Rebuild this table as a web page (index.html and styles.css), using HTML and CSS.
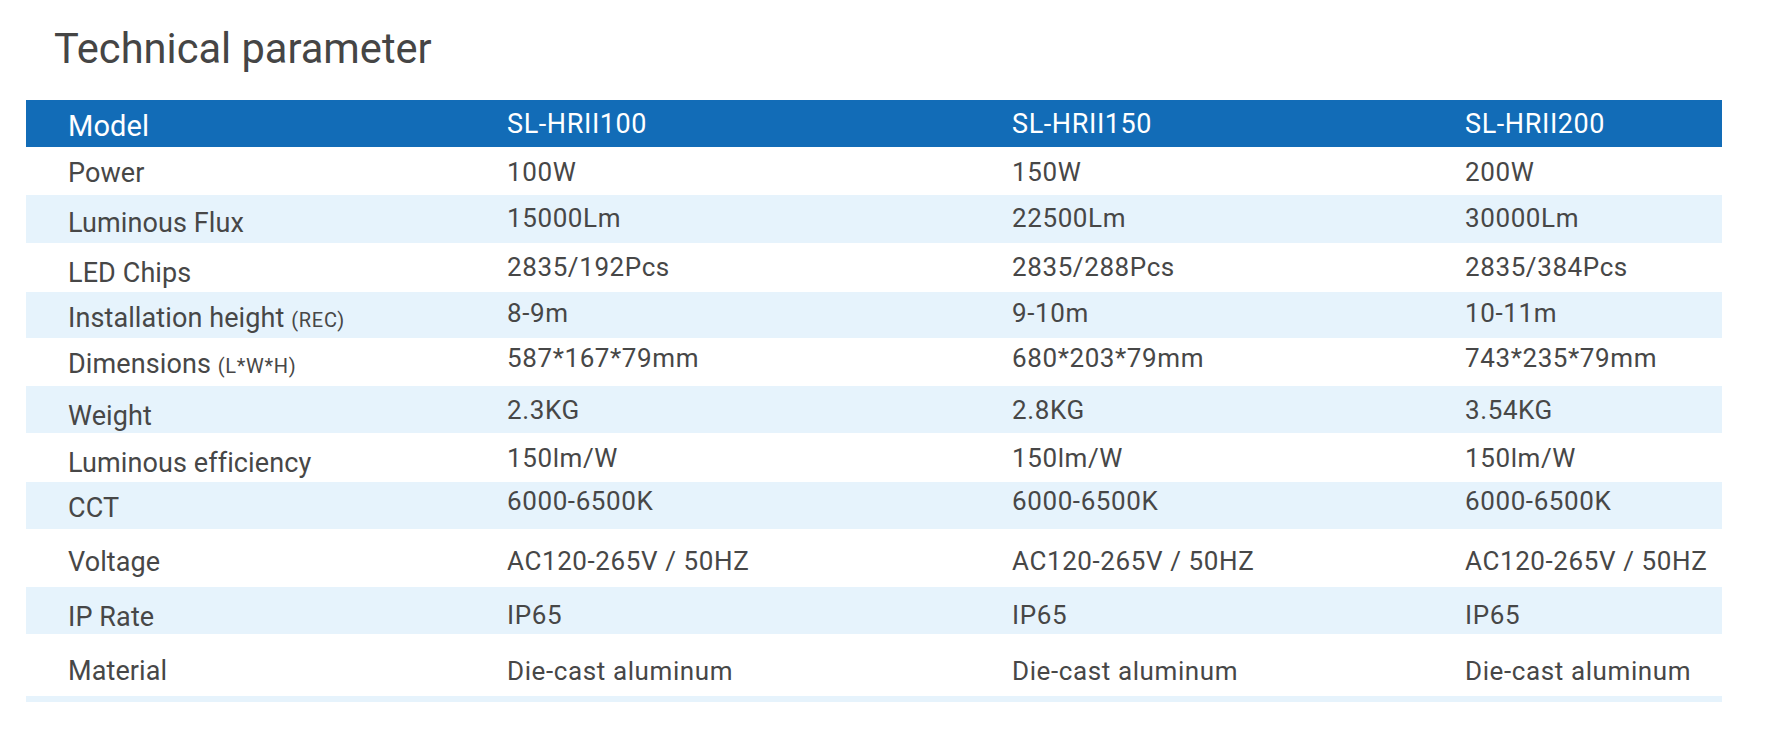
FILE: index.html
```html
<!DOCTYPE html>
<html lang="en">
<head>
<meta charset="utf-8">
<title>Technical parameter</title>
<link rel="stylesheet" href="styles.css">
</head>
<body>
<div class="page">
  <h1 class="title">Technical parameter</h1>
  <div class="table">
    <div class="row head">
      <div class="cell label">Model</div>
      <div class="cell">SL-HRII100</div>
      <div class="cell">SL-HRII150</div>
      <div class="cell">SL-HRII200</div>
    </div>
    <div class="row r-power">
      <div class="cell label">Power</div>
      <div class="cell">100W</div>
      <div class="cell">150W</div>
      <div class="cell">200W</div>
    </div>
    <div class="row alt r-flux">
      <div class="cell label">Luminous Flux</div>
      <div class="cell">15000Lm</div>
      <div class="cell">22500Lm</div>
      <div class="cell">30000Lm</div>
    </div>
    <div class="row r-led">
      <div class="cell label">LED Chips</div>
      <div class="cell">2835/192Pcs</div>
      <div class="cell">2835/288Pcs</div>
      <div class="cell">2835/384Pcs</div>
    </div>
    <div class="row alt r-inst">
      <div class="cell label">Installation height <small>(REC)</small></div>
      <div class="cell">8-9m</div>
      <div class="cell">9-10m</div>
      <div class="cell">10-11m</div>
    </div>
    <div class="row r-dim">
      <div class="cell label">Dimensions <small>(L*W*H)</small></div>
      <div class="cell">587*167*79mm</div>
      <div class="cell">680*203*79mm</div>
      <div class="cell">743*235*79mm</div>
    </div>
    <div class="row alt r-weight">
      <div class="cell label">Weight</div>
      <div class="cell">2.3KG</div>
      <div class="cell">2.8KG</div>
      <div class="cell">3.54KG</div>
    </div>
    <div class="row r-eff">
      <div class="cell label">Luminous efficiency</div>
      <div class="cell">150lm/W</div>
      <div class="cell">150lm/W</div>
      <div class="cell">150lm/W</div>
    </div>
    <div class="row alt r-cct">
      <div class="cell label">CCT</div>
      <div class="cell">6000-6500K</div>
      <div class="cell">6000-6500K</div>
      <div class="cell">6000-6500K</div>
    </div>
    <div class="row r-volt">
      <div class="cell label">Voltage</div>
      <div class="cell">AC120-265V / 50HZ</div>
      <div class="cell">AC120-265V / 50HZ</div>
      <div class="cell">AC120-265V / 50HZ</div>
    </div>
    <div class="row alt r-ip">
      <div class="cell label">IP Rate</div>
      <div class="cell">IP65</div>
      <div class="cell">IP65</div>
      <div class="cell">IP65</div>
    </div>
    <div class="row r-mat">
      <div class="cell label">Material</div>
      <div class="cell">Die-cast aluminum</div>
      <div class="cell">Die-cast aluminum</div>
      <div class="cell">Die-cast aluminum</div>
    </div>
    <div class="strip"></div>
  </div>
</div>
</body>
</html>
```

FILE: styles.css
```css
* { box-sizing: border-box; }

html, body {
  margin: 0;
  padding: 0;
  background: #ffffff;
}

body {
  font-family: Roboto, "Liberation Sans", Arial, sans-serif;
  color: #474747;
}

.page {
  width: 1779px;
  height: 734px;
  padding-top: 28px;
}

.title {
  margin: 0 0 0 54px;
  font-size: 41.6px;
  line-height: 41px;
  font-weight: 400;
  color: #454545;
  height: 72px;
}

.table {
  margin-left: 26px;
  width: 1696px;
}

.row {
  display: grid;
  grid-template-columns: 481px 505px 453px 1fr;
  height: 48px;
  background: #ffffff;
}

.row.alt {
  background: #e6f3fc;
}

.cell {
  font-size: 26px;
  line-height: 26px;
  letter-spacing: 0.6px;
  white-space: nowrap;
}

.cell.label {
  padding-left: 42px;
  font-size: 27px;
  letter-spacing: 0.1px;
}

.cell small {
  font-size: 20px;
  letter-spacing: 0.7px;
}

.row.head {
  background: #126cb7;
  height: 47px;
  color: #ffffff;
}

.row.head .cell {
  padding-top: 11px;
  font-size: 27px;
}

.row.head .cell.label {
  font-size: 29px;
  line-height: 29px;
  padding-top: 12px;
}

/* per-row vertical placement */
.r-power .cell { padding-top: 12px; }
.r-power .label { padding-top: 13px; }

.r-flux .cell { padding-top: 10px; }
.r-flux .label { padding-top: 15px; }

.r-led { height: 49px; }
.r-led .cell { padding-top: 11px; }
.r-led .label { padding-top: 17px; }

.r-inst { height: 46px; }
.r-inst .cell { padding-top: 8px; }
.r-inst .label { padding-top: 13px; }

.r-dim .cell { padding-top: 7px; }
.r-dim .label { padding-top: 13px; }

.r-weight { height: 47px; }
.r-weight .cell { padding-top: 11px; }
.r-weight .label { padding-top: 17px; }

.r-eff { height: 49px; }
.r-eff .cell { padding-top: 12px; }
.r-eff .label { padding-top: 17px; }

.r-cct { height: 47px; }
.r-cct .cell { padding-top: 6px; }
.r-cct .label { padding-top: 13px; }

.r-volt { height: 58px; }
.r-volt .cell { padding-top: 19px; }
.r-volt .label { padding-top: 20px; }

.r-ip { height: 47px; }
.r-ip .cell { padding-top: 15px; }
.r-ip .label { padding-top: 17px; }

.r-mat { height: 62px; }
.r-mat .cell { padding-top: 24px; }
.r-mat .label { padding-top: 24px; }

.strip {
  height: 6px;
  background: #e6f3fc;
}
```
